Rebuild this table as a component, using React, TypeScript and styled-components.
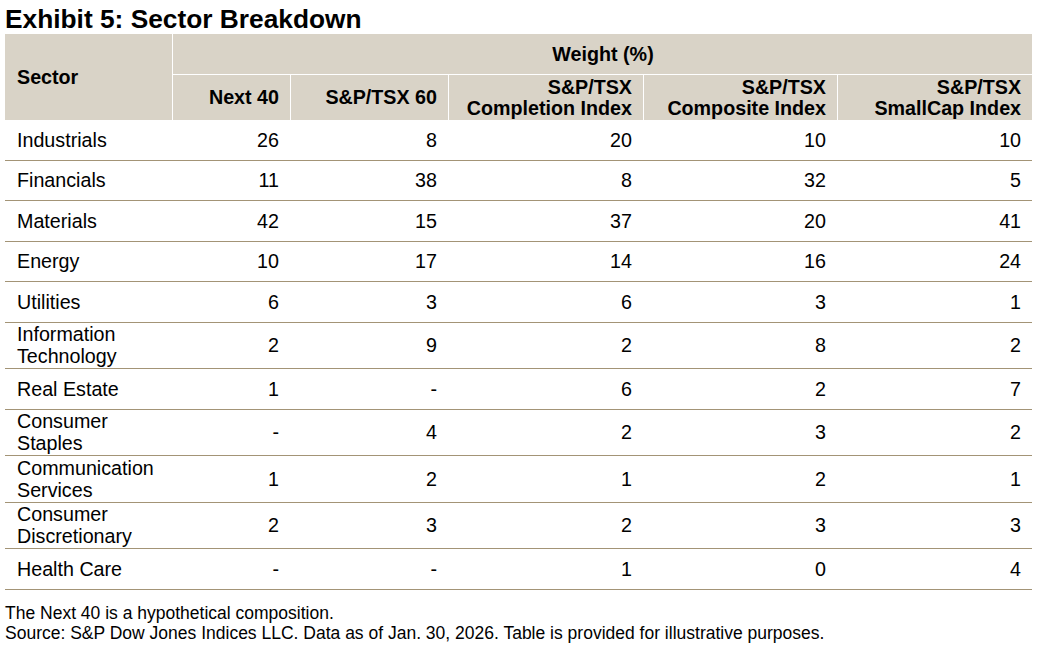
import styled, { createGlobalStyle } from "styled-components";

const GlobalStyle = createGlobalStyle`
  body {
    margin: 0;
    background: #ffffff;
    font-family: "Liberation Sans", Arial, sans-serif;
    color: #000000;
  }
`;

const Page = styled.div`
  padding: 4px 0 0 5px;
  width: 1027px;
`;

const Title = styled.h1`
  margin: 0;
  font-size: 26.3px;
  line-height: 30px;
  font-weight: 700;
`;

const Table = styled.table`
  width: 1027px;
  table-layout: fixed;
  border-collapse: separate;
  border-spacing: 0;
  font-size: 19.7px;
`;

const HeadCell = styled.th<{ $align?: "left" | "center" | "right"; $top?: boolean; $left?: boolean; $h: number }>`
  box-sizing: border-box;
  background: #d9d3c7;
  font-weight: 700;
  line-height: 21px;
  height: ${(p) => p.$h}px;
  padding: 0 11px 0 12px;
  text-align: ${(p) => p.$align || "right"};
  vertical-align: middle;
  border-left: ${(p) => (p.$left ? "1px solid #ffffff" : "none")};
  border-top: ${(p) => (p.$top ? "1px solid #ffffff" : "none")};
`;

const Cell = styled.td<{ $first?: boolean; $tall?: boolean }>`
  box-sizing: border-box;
  height: ${(p) => (p.$tall ? 46.5 : 40.5)}px;
  padding: ${(p) => (p.$tall ? "0.75px" : "0")} 11px;
  padding-left: ${(p) => (p.$first ? "12px" : "11px")};
  line-height: 22px;
  text-align: ${(p) => (p.$first ? "left" : "right")};
  vertical-align: middle;
  border-bottom: 1px solid #a39476;
`;

const Notes = styled.div`
  margin-top: 13px;
  font-size: 17.5px;
  line-height: 20px;
`;

const columns = [
  { w: 118, label: ["Next 40"] },
  { w: 158, label: ["S&P/TSX 60"] },
  { w: 195, label: ["S&P/TSX", "Completion Index"] },
  { w: 194, label: ["S&P/TSX", "Composite Index"] },
  { w: 195, label: ["S&P/TSX", "SmallCap Index"] },
];

const rows: { sector: string[]; values: string[] }[] = [
  { sector: ["Industrials"], values: ["26", "8", "20", "10", "10"] },
  { sector: ["Financials"], values: ["11", "38", "8", "32", "5"] },
  { sector: ["Materials"], values: ["42", "15", "37", "20", "41"] },
  { sector: ["Energy"], values: ["10", "17", "14", "16", "24"] },
  { sector: ["Utilities"], values: ["6", "3", "6", "3", "1"] },
  { sector: ["Information", "Technology"], values: ["2", "9", "2", "8", "2"] },
  { sector: ["Real Estate"], values: ["1", "-", "6", "2", "7"] },
  { sector: ["Consumer", "Staples"], values: ["-", "4", "2", "3", "2"] },
  { sector: ["Communication", "Services"], values: ["1", "2", "1", "2", "1"] },
  { sector: ["Consumer", "Discretionary"], values: ["2", "3", "2", "3", "3"] },
  { sector: ["Health Care"], values: ["-", "-", "1", "0", "4"] },
];

function Lines({ parts }: { parts: string[] }) {
  return (
    <>
      {parts.map((t, i) => (
        <span key={i}>
          {i > 0 && <br />}
          {t}
        </span>
      ))}
    </>
  );
}

export default function App() {
  return (
    <Page>
      <GlobalStyle />
      <Title>Exhibit 5: Sector Breakdown</Title>
      <Table>
        <colgroup>
          <col style={{ width: 167 }} />
          {columns.map((c, i) => (
            <col key={i} style={{ width: c.w }} />
          ))}
        </colgroup>
        <thead>
          <tr>
            <HeadCell rowSpan={2} $align="left" $h={40}>
              Sector
            </HeadCell>
            <HeadCell colSpan={5} $align="center" $left $h={40}>
              Weight (%)
            </HeadCell>
          </tr>
          <tr>
            {columns.map((c, i) => (
              <HeadCell key={i} $left $top $h={46}>
                <Lines parts={c.label} />
              </HeadCell>
            ))}
          </tr>
        </thead>
        <tbody>
          {rows.map((r) => {
            const tall = r.sector.length > 1;
            return (
              <tr key={r.sector.join(" ")}>
                <Cell $first $tall={tall}>
                  <Lines parts={r.sector} />
                </Cell>
                {r.values.map((v, i) => (
                  <Cell key={i} $tall={tall}>
                    {v}
                  </Cell>
                ))}
              </tr>
            );
          })}
        </tbody>
      </Table>
      <Notes>
        The Next 40 is a hypothetical composition.
        <br />
        Source: S&amp;P Dow Jones Indices LLC. Data as of Jan. 30, 2026. Table is provided for illustrative purposes.
      </Notes>
    </Page>
  );
}
